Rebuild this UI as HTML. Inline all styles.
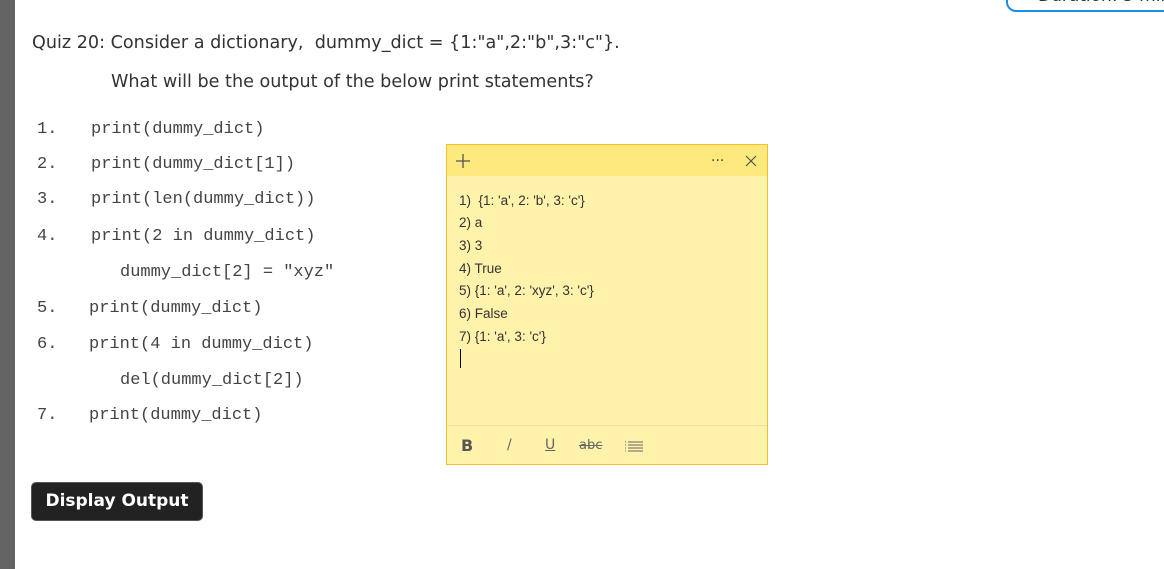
<!DOCTYPE html>
<html><head><style>
body{margin:0;width:1164px;height:569px;background:#fff;position:relative;overflow:hidden;font-family:"DejaVu Sans","Liberation Sans",sans-serif;color:#333}
.bar{position:absolute;left:0;top:0;width:15px;height:569px;background:#646464}
.t{position:absolute;white-space:pre;font-size:17.6px}
.c{position:absolute;white-space:pre;font-family:"Liberation Mono","DejaVu Sans Mono",monospace;font-size:17px;color:#444}
.dur{position:absolute;left:1006px;top:-16px;width:180px;height:28px;border:2px solid #1a8fe6;border-radius:10px;font-size:17px;color:#333;padding-left:30px;line-height:20px;box-sizing:border-box;white-space:pre}
.note{position:absolute;left:446px;top:144px;width:320px;height:319px;border:1px solid #f2c02a;background:#fff2ab}
.hd{height:31px;background:#fde97d}
.n{position:absolute;left:12px;font-size:13.5px;color:#333;white-space:pre;font-family:"Liberation Sans",sans-serif}
.btn{position:absolute;left:32px;top:483px;width:170px;height:37px;background:#222;border-radius:4px;color:#fff;font-weight:bold;font-size:17px;line-height:37px;text-align:center;box-shadow:0 0 0 1px #555}
</style></head><body>
<div class="bar"></div>
<div class="dur">Duration: 5 min</div>
<div class="t" style="left:32px;top:33px">Quiz 20: Consider a dictionary,  dummy_dict = {1:"a",2:"b",3:"c"}.</div>
<div class="t" style="left:111px;top:72px">What will be the output of the below print statements?</div>
<div class="c" style="left:37px;top:120px">1.</div><div class="c" style="left:91px;top:120px">print(dummy_dict)</div>
<div class="c" style="left:37px;top:155px">2.</div><div class="c" style="left:91px;top:155px">print(dummy_dict[1])</div>
<div class="c" style="left:37px;top:190px">3.</div><div class="c" style="left:91px;top:190px">print(len(dummy_dict))</div>
<div class="c" style="left:37px;top:227px">4.</div><div class="c" style="left:91px;top:227px">print(2 in dummy_dict)</div>
<div class="c" style="left:120px;top:263px">dummy_dict[2] = "xyz"</div>
<div class="c" style="left:37px;top:299px">5.</div><div class="c" style="left:89px;top:299px">print(dummy_dict)</div>
<div class="c" style="left:37px;top:335px">6.</div><div class="c" style="left:89px;top:335px">print(4 in dummy_dict)</div>
<div class="c" style="left:120px;top:371px">del(dummy_dict[2])</div>
<div class="c" style="left:37px;top:406px">7.</div><div class="c" style="left:89px;top:406px">print(dummy_dict)</div>
<div class="note">
<div class="hd"></div>
<svg style="position:absolute;left:8px;top:8px" width="16" height="16"><path d="M8 1V15M1 8H15" stroke="#555" stroke-width="1.3"/></svg>
<div style="position:absolute;left:264px;top:8px;font-size:14px;color:#444">···</div>
<svg style="position:absolute;left:298px;top:10px" width="12" height="12"><path d="M1 1L11 11M11 1L1 11" stroke="#555" stroke-width="1.2"/></svg>
<div class="n" style="top:48px">1)  {1: 'a', 2: 'b', 3: 'c'}</div>
<div class="n" style="top:70px">2) a</div>
<div class="n" style="top:93px">3) 3</div>
<div class="n" style="top:116px">4) True</div>
<div class="n" style="top:138px">5) {1: 'a', 2: 'xyz', 3: 'c'}</div>
<div class="n" style="top:161px">6) False</div>
<div class="n" style="top:184px">7) {1: 'a', 3: 'c'}</div>
<div style="position:absolute;left:13px;top:204px;width:1px;height:19px;background:#000"></div>
<div style="position:absolute;left:0;top:280px;width:320px;height:1px;background:#ede0a0"></div>
<div style="position:absolute;left:14px;top:291px;font-size:16px;font-weight:bold;color:#555">B</div>
<div style="position:absolute;left:60px;top:292px;font-size:14px;color:#666">/</div>
<div style="position:absolute;left:98px;top:292px;font-size:14px;color:#666;text-decoration:underline">U</div>
<div style="position:absolute;left:132px;top:293px;font-size:13px;color:#666;text-decoration:line-through">abc</div>
<svg style="position:absolute;left:178px;top:296px" width="18" height="13"><path d="M0 1H1M3 1H18M0 4H1M3 4H18M0 7H1M3 7H18M0 10H1M3 10H18" stroke="#666" stroke-width="1"/></svg>
</div>
<div class="btn">Display Output</div>
</body></html>
